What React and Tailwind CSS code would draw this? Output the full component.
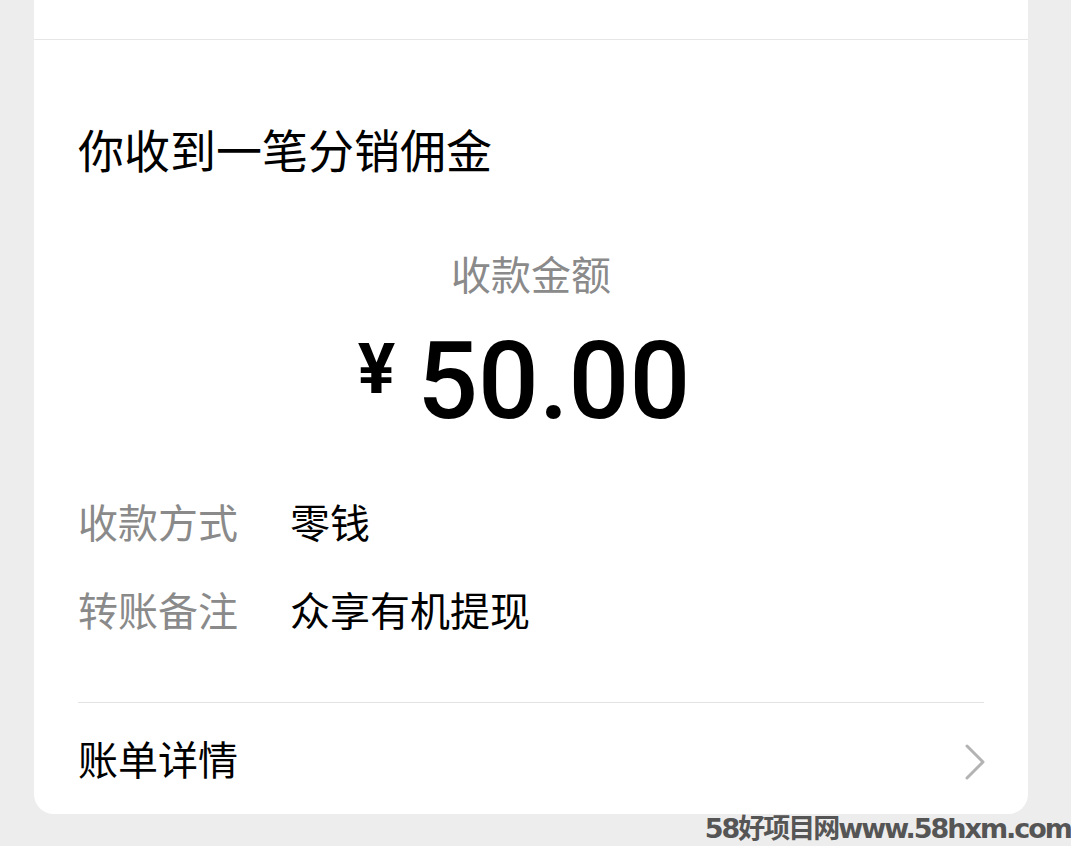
import React from "react";

const cjk = { fontFamily: '"Noto Sans CJK SC", "Noto Sans", sans-serif' };

const rows = [
  { label: "收款方式", value: "零钱" },
  { label: "转账备注", value: "众享有机提现" },
];

function Chevron() {
  return (
    <svg width="22" height="36" viewBox="0 0 22 36" fill="none">
      <path d="M3 2 L19 18 L3 34" stroke="#b3b3b3" strokeWidth="3" strokeLinecap="round" strokeLinejoin="round" />
    </svg>
  );
}

export default function App() {
  return (
    <div className="relative h-[846px] w-full overflow-hidden bg-[#ededed]" style={cjk}>
      <div className="ml-[34px] w-[994px] rounded-b-[20px] bg-white">
        {/* top section, cut off by the screen */}
        <div className="h-[40px] border-b border-[#e6e6e6]" />

        <div className="px-[44px] pt-[81px]">
          <h1 className="text-[46px] leading-[55px] text-black">你收到一笔分销佣金</h1>

          <div className="mt-[73px] text-center text-[40px] leading-[48px] text-[#8a8a8a]">收款金额</div>

          <div className="mt-[31px] flex items-start justify-center pr-[14px]" style={{ fontFamily: "Roboto, sans-serif" }}>
            <span className="mt-[8px] mr-[22px] text-[70px] font-bold leading-[66px] text-black">¥</span>
            <span className="text-[107px] font-medium leading-[107px] text-black">50.00</span>
          </div>

          <div className="mt-[62px] flex flex-col gap-[40px]">
            {rows.map((r) => (
              <div key={r.label} className="flex text-[40px] leading-[48px]">
                <span className="w-[212px] text-[#8a8a8a]">{r.label}</span>
                <span className="text-black">{r.value}</span>
              </div>
            ))}
          </div>

          <div className="mt-[69px] border-t border-[#e3e3e3]" />

          <div className="flex h-[111px] items-center justify-between pb-[2px]">
            <span className="text-[40px] leading-[48px] text-black">账单详情</span>
            <span className="mt-[8px] -mr-[2px]">
              <Chevron />
            </span>
          </div>
        </div>
      </div>

      <div
        className="absolute right-0 bottom-0 text-[27px] font-bold leading-[34px] tracking-[-2px] text-[#555]"
        style={{ fontFamily: '"DejaVu Sans", "Noto Sans CJK SC", sans-serif' }}
      >
        58好项目网www.58hxm.com
      </div>
    </div>
  );
}
